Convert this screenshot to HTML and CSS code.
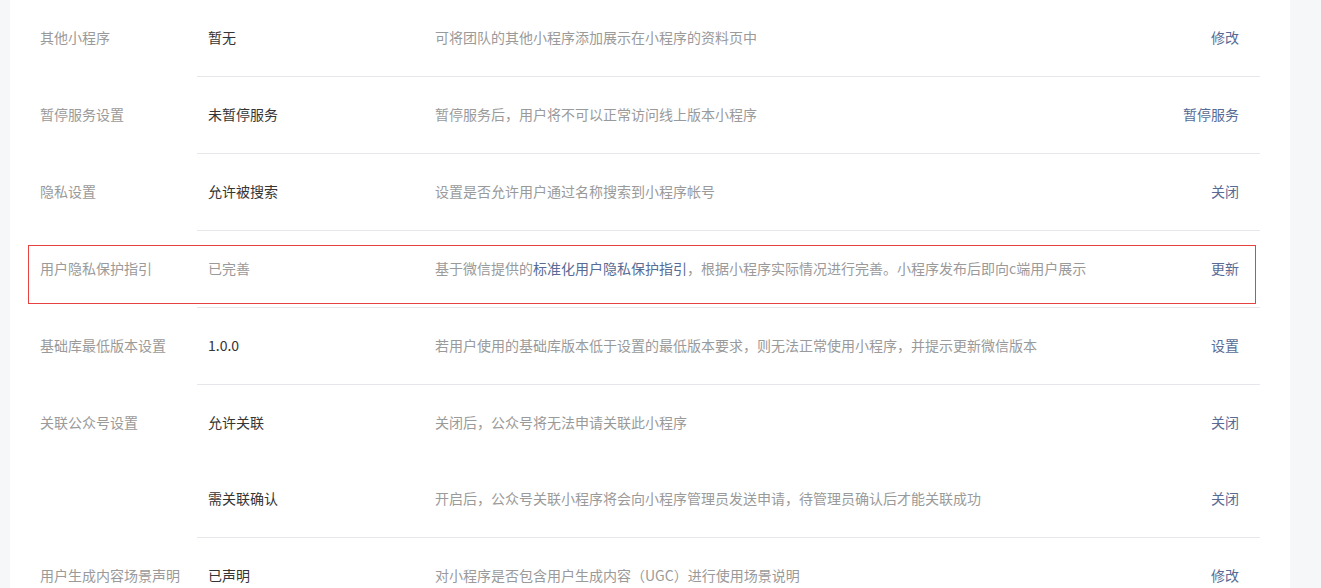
FILE: index.html
```html
<!DOCTYPE html>
<html>

<head>
    <title>设置</title>
    <link rel="stylesheet" href="styles.css">
</head>

<body>
    <div class="page">
        <div class="card">
            <div class="group">
                <div class="group-label">其他小程序</div>
                <div class="group-items">
                    <div class="item">
                        <span class="value">暂无</span>
                        <span class="desc">可将团队的其他小程序添加展示在小程序的资料页中</span>
                        <a class="action">修改</a>
                    </div>
                </div>
            </div>

            <div class="group">
                <div class="group-label">暂停服务设置</div>
                <div class="group-items">
                    <div class="item">
                        <span class="value">未暂停服务</span>
                        <span class="desc">暂停服务后，用户将不可以正常访问线上版本小程序</span>
                        <a class="action">暂停服务</a>
                    </div>
                </div>
            </div>

            <div class="group">
                <div class="group-label">隐私设置</div>
                <div class="group-items">
                    <div class="item">
                        <span class="value">允许被搜索</span>
                        <span class="desc">设置是否允许用户通过名称搜索到小程序帐号</span>
                        <a class="action">关闭</a>
                    </div>
                </div>
            </div>

            <div class="group highlighted">
                <div class="group-label">用户隐私保护指引</div>
                <div class="group-items">
                    <div class="item">
                        <span class="value muted">已完善</span>
                        <span class="desc">基于微信提供的<a class="inline-link">标准化用户隐私保护指引</a>，根据小程序实际情况进行完善。小程序发布后即向c端用户展示</span>
                        <a class="action">更新</a>
                    </div>
                </div>
                <div class="mark"></div>
            </div>

            <div class="group">
                <div class="group-label">基础库最低版本设置</div>
                <div class="group-items">
                    <div class="item">
                        <span class="value">1.0.0</span>
                        <span class="desc">若用户使用的基础库版本低于设置的最低版本要求，则无法正常使用小程序，并提示更新微信版本</span>
                        <a class="action">设置</a>
                    </div>
                </div>
            </div>

            <div class="group">
                <div class="group-label">关联公众号设置</div>
                <div class="group-items">
                    <div class="item">
                        <span class="value">允许关联</span>
                        <span class="desc">关闭后，公众号将无法申请关联此小程序</span>
                        <a class="action">关闭</a>
                    </div>
                    <div class="item">
                        <span class="value">需关联确认</span>
                        <span class="desc">开启后，公众号关联小程序将会向小程序管理员发送申请，待管理员确认后才能关联成功</span>
                        <a class="action">关闭</a>
                    </div>
                </div>
            </div>

            <div class="group">
                <div class="group-label">用户生成内容场景声明</div>
                <div class="group-items">
                    <div class="item">
                        <span class="value">已声明</span>
                        <span class="desc">对小程序是否包含用户生成内容（UGC）进行使用场景说明</span>
                        <a class="action">修改</a>
                    </div>
                </div>
            </div>
        </div>
    </div>
</body>

</html>
```

FILE: styles.css
```css
body {
    margin: 0;
    background-color: #f6f7f9;
    font-family: "Noto Sans CJK SC", "Liberation Sans", sans-serif;
    font-size: 14px;
    color: #353535;
}

.page {
    width: 1321px;
    height: 588px;
    overflow: hidden;
    box-sizing: border-box;
    padding-left: 10px;
    padding-right: 31px;
}

.card {
    background-color: #fff;
    padding: 0 30px;
    min-height: 100%;
}

.group {
    display: flex;
    position: relative;
}

.group-label {
    width: 157px;
    flex-shrink: 0;
    line-height: 74px;
    padding-bottom: 2px;
    color: #9a9a9a;
    white-space: nowrap;
}

.group-items {
    flex: 1;
    border-bottom: 1px solid #e7e7eb;
}

.item {
    height: 76px;
    box-sizing: border-box;
    display: flex;
    align-items: center;
    padding-left: 11px;
    padding-right: 21px;
    padding-bottom: 2px;
}

.value {
    width: 227px;
    flex-shrink: 0;
    color: #353535;
}

.value.muted {
    color: #9a9a9a;
}

.desc {
    flex: 1;
    color: #9a9a9a;
    white-space: nowrap;
}

.inline-link {
    color: #576b95;
}

.action {
    color: #576b95;
    white-space: nowrap;
    cursor: pointer;
}

.mark {
    position: absolute;
    left: -12px;
    top: 14px;
    width: 1228px;
    height: 59px;
    box-sizing: border-box;
    border: 1px solid #e64340;
    pointer-events: none;
}
```
